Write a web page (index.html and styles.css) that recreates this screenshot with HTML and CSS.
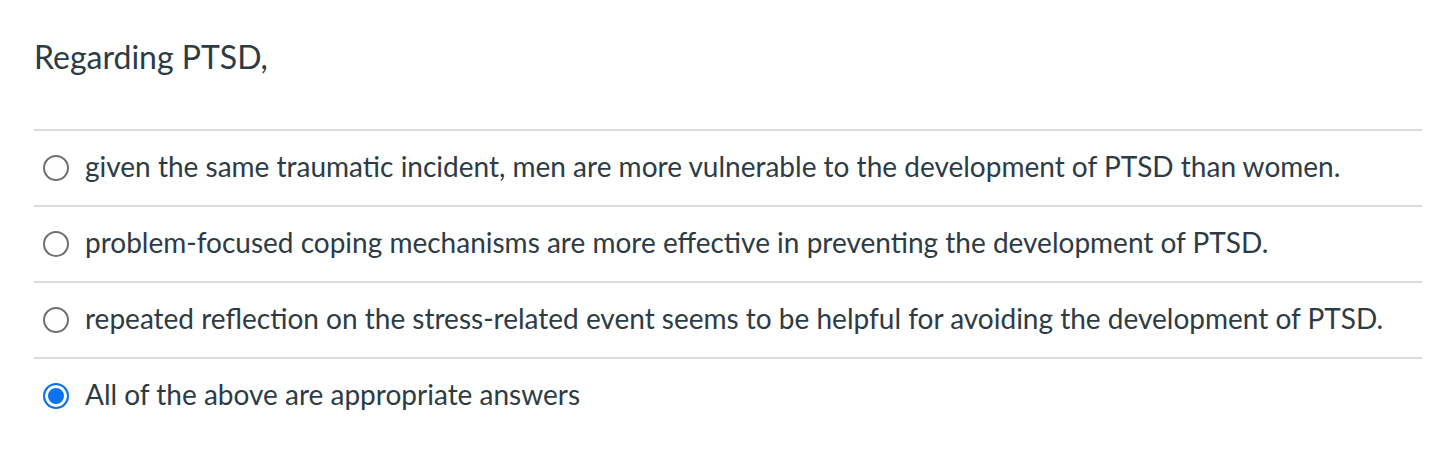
FILE: index.html
```html
<!DOCTYPE html>
<html>
<head>
<meta charset="utf-8">
<link rel="stylesheet" href="styles.css">
</head>
<body>
<div class="quiz">
  <div class="question">Regarding PTSD,</div>
  <div class="answers">
    <label class="answer"><span class="radio"></span><span class="text">given the same traumatic incident, men are more vulnerable to the development of PTSD than women.</span></label>
    <label class="answer"><span class="radio"></span><span class="text">problem-focused coping mechanisms are more effective in preventing the development of PTSD.</span></label>
    <label class="answer"><span class="radio"></span><span class="text">repeated reflection on the stress-related event seems to be helpful for avoiding the development of PTSD.</span></label>
    <label class="answer"><span class="radio checked"></span><span class="text">All of the above are appropriate answers</span></label>
  </div>
</div>
</body>
</html>
```

FILE: styles.css
```css
html, body {
  margin: 0;
  padding: 0;
  background: #ffffff;
}
body {
  font-family: Lato, "Noto Sans", sans-serif;
  color: #2d3b45;
}
.quiz {
  width: 1388px;
  margin-left: 34px;
}
.question {
  height: 129px;
  box-sizing: border-box;
  padding-top: 36px;
  font-size: 32px;
  line-height: 42px;
}
.answer {
  display: flex;
  align-items: center;
  height: 76px;
  box-sizing: border-box;
  border-top: 2px solid #dcdcdc;
  padding-left: 9px;
  padding-bottom: 4px;
}
.radio {
  width: 26px;
  height: 26px;
  box-sizing: border-box;
  border: 2px solid #707070;
  border-radius: 50%;
  flex: none;
  margin-right: 16px;
  margin-top: 3px;
}
.radio.checked {
  border: 2px solid #0b72f0;
  background: #0b72f0;
  box-shadow: inset 0 0 0 3px #ffffff;
}
.text {
  font-size: 28px;
  line-height: 34px;
}
```
